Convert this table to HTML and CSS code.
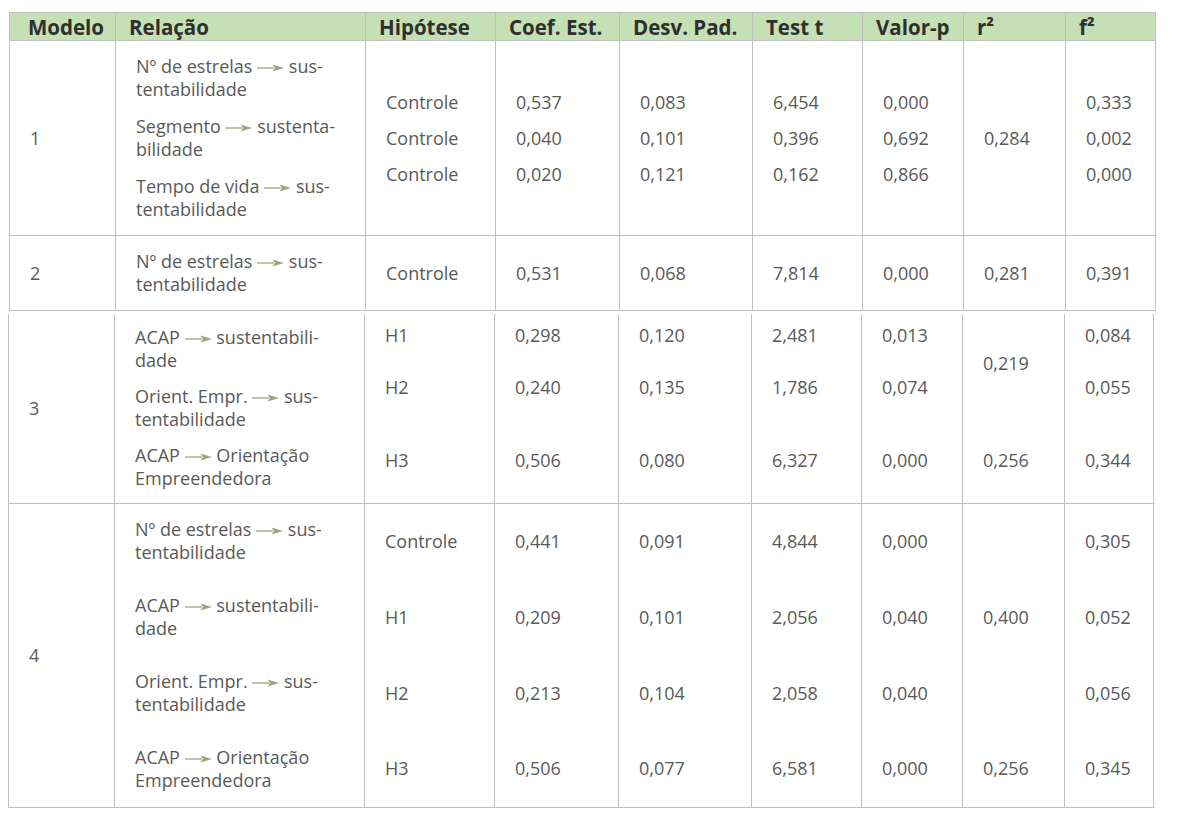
FILE: index.html
```html
<!DOCTYPE html>
<html lang="pt">
<head>
<meta charset="utf-8">
<title>Modelos</title>
<link rel="stylesheet" href="styles.css">
</head>
<body>
<svg width="0" height="0" class="defs" aria-hidden="true">
  <defs>
    <symbol id="arr" viewBox="0 0 27 8">
      <line x1="0" y1="4" x2="17" y2="4" stroke="#98a67a" stroke-width="1.3"/>
      <polygon points="15.5,0.6 27,4 15.5,7.4 18,4" fill="#98a67a"/>
    </symbol>
  </defs>
</svg>
<table class="t t-a">
  <colgroup>
    <col class="c1"><col class="c2"><col class="c3"><col class="c4"><col class="c5"><col class="c6"><col class="c7"><col class="c8"><col class="c9">
  </colgroup>
  <thead>
    <tr class="hd">
      <th class="first">Modelo</th><th>Relação</th><th>Hipótese</th><th>Coef. Est.</th><th>Desv. Pad.</th><th>Test t</th><th>Valor-p</th><th>r²</th><th>f²</th>
    </tr>
  </thead>
  <tbody>
    <tr class="r1">
      <td>1</td>
      <td><div class="rel-stack">
        <p>Nº de estrelas <svg class="ar"><use href="#arr"/></svg> sus-<br>tentabilidade</p>
        <p>Segmento <svg class="ar"><use href="#arr"/></svg> sustenta-<br>bilidade</p>
        <p>Tempo de vida <svg class="ar"><use href="#arr"/></svg> sus-<br>tentabilidade</p>
      </div></td>
      <td><div class="val-stack"><p>Controle</p><p>Controle</p><p>Controle</p></div></td>
      <td><div class="val-stack"><p>0,537</p><p>0,040</p><p>0,020</p></div></td>
      <td><div class="val-stack"><p>0,083</p><p>0,101</p><p>0,121</p></div></td>
      <td><div class="val-stack"><p>6,454</p><p>0,396</p><p>0,162</p></div></td>
      <td><div class="val-stack"><p>0,000</p><p>0,692</p><p>0,866</p></div></td>
      <td>0,284</td>
      <td><div class="val-stack"><p>0,333</p><p>0,002</p><p>0,000</p></div></td>
    </tr>
  </tbody>
  <tbody>
    <tr class="r2">
      <td>2</td>
      <td>Nº de estrelas <svg class="ar"><use href="#arr"/></svg> sus-<br>tentabilidade</td>
      <td>Controle</td><td>0,531</td><td>0,068</td><td>7,814</td><td>0,000</td><td>0,281</td><td>0,391</td>
    </tr>
  </tbody>
</table>
<table class="t t-b">
  <colgroup>
    <col class="c1"><col class="c2"><col class="c3"><col class="c4"><col class="c5"><col class="c6"><col class="c7"><col class="c8"><col class="c9b">
  </colgroup>
  <tbody>
    <tr class="r3a">
      <td rowspan="3">3</td>
      <td rowspan="3"><div class="rel-stack tight">
        <p>ACAP <svg class="ar"><use href="#arr"/></svg> sustentabili-<br>dade</p>
        <p>Orient. Empr. <svg class="ar"><use href="#arr"/></svg> sus-<br>tentabilidade</p>
        <p>ACAP <svg class="ar"><use href="#arr"/></svg> Orientação<br>Empreendedora</p>
      </div></td>
      <td>H1</td><td>0,298</td><td>0,120</td><td>2,481</td><td>0,013</td>
      <td rowspan="2" class="up">0,219</td>
      <td>0,084</td>
    </tr>
    <tr class="r3b">
      <td>H2</td><td>0,240</td><td>0,135</td><td>1,786</td><td>0,074</td><td>0,055</td>
    </tr>
    <tr class="r3c">
      <td>H3</td><td>0,506</td><td>0,080</td><td>6,327</td><td>0,000</td><td>0,256</td><td>0,344</td>
    </tr>
  </tbody>
  <tbody>
    <tr class="r4">
      <td rowspan="4">4</td>
      <td>Nº de estrelas <svg class="ar"><use href="#arr"/></svg> sus-<br>tentabilidade</td>
      <td>Controle</td><td>0,441</td><td>0,091</td><td>4,844</td><td>0,000</td>
      <td rowspan="3">0,400</td>
      <td>0,305</td>
    </tr>
    <tr class="r4">
      <td>ACAP <svg class="ar"><use href="#arr"/></svg> sustentabili-<br>dade</td>
      <td>H1</td><td>0,209</td><td>0,101</td><td>2,056</td><td>0,040</td><td>0,052</td>
    </tr>
    <tr class="r4">
      <td>Orient. Empr. <svg class="ar"><use href="#arr"/></svg> sus-<br>tentabilidade</td>
      <td>H2</td><td>0,213</td><td>0,104</td><td>2,058</td><td>0,040</td><td>0,056</td>
    </tr>
    <tr class="r4">
      <td>ACAP <svg class="ar"><use href="#arr"/></svg> Orientação<br>Empreendedora</td>
      <td>H3</td><td>0,506</td><td>0,077</td><td>6,581</td><td>0,000</td><td>0,256</td><td>0,345</td>
    </tr>
  </tbody>
</table>
</body>
</html>
```

FILE: styles.css
```css
html, body {
  margin: 0;
  padding: 0;
  background: #ffffff;
}
body {
  font-family: "Open Sans", "Liberation Sans", sans-serif;
  font-size: 18px;
  line-height: 23px;
  color: #595959;
}
.defs {
  position: absolute;
  width: 0;
  height: 0;
  overflow: hidden;
}
.t {
  border-collapse: collapse;
  table-layout: fixed;
}
.t-a {
  margin: 12px 0 0 9px;
  width: 1146px;
}
.t-b {
  margin: 3px 0 0 8px;
  width: 1145px;
}
.c1 { width: 106px; }
.c2 { width: 250px; }
.c3 { width: 130px; }
.c4 { width: 124px; }
.c5 { width: 133px; }
.c6 { width: 110px; }
.c7 { width: 101px; }
.c8 { width: 102px; }
.c9 { width: 90px; }
.c9b { width: 89px; }

.t th,
.t td {
  border-left: 1px solid #bfbfbf;
  border-right: 1px solid #bfbfbf;
  padding: 0 0 0 20px;
  vertical-align: middle;
  text-align: left;
  white-space: nowrap;
}
.t thead {
  border-top: 1px solid #bfbfbf;
  border-bottom: 1px solid #bfbfbf;
}
.t tbody {
  border-bottom: 1px solid #bfbfbf;
}
.t th {
  background: #c5e0b4;
  color: #2f2f2f;
  font-weight: 700;
  font-size: 20.5px;
  padding-left: 13px;
  line-height: 26px;
}
.t th.first {
  padding-left: 18px;
}
.hd { height: 28px; }
.r1 { height: 195px; }
.r2 { height: 75px; }
.r3a { height: 43px; }
.r3b { height: 61px; }
.r3c { height: 85px; }
.r4 { height: 76px; }

.t p {
  margin: 0;
}
.rel-stack {
  display: flex;
  flex-direction: column;
  gap: 14px;
}
.rel-stack.tight {
  gap: 13px;
}
.val-stack {
  display: flex;
  flex-direction: column;
  gap: 13px;
}
.t td.up {
  padding-bottom: 6px;
}
.ar {
  width: 27px;
  height: 8px;
  vertical-align: middle;
}
```
